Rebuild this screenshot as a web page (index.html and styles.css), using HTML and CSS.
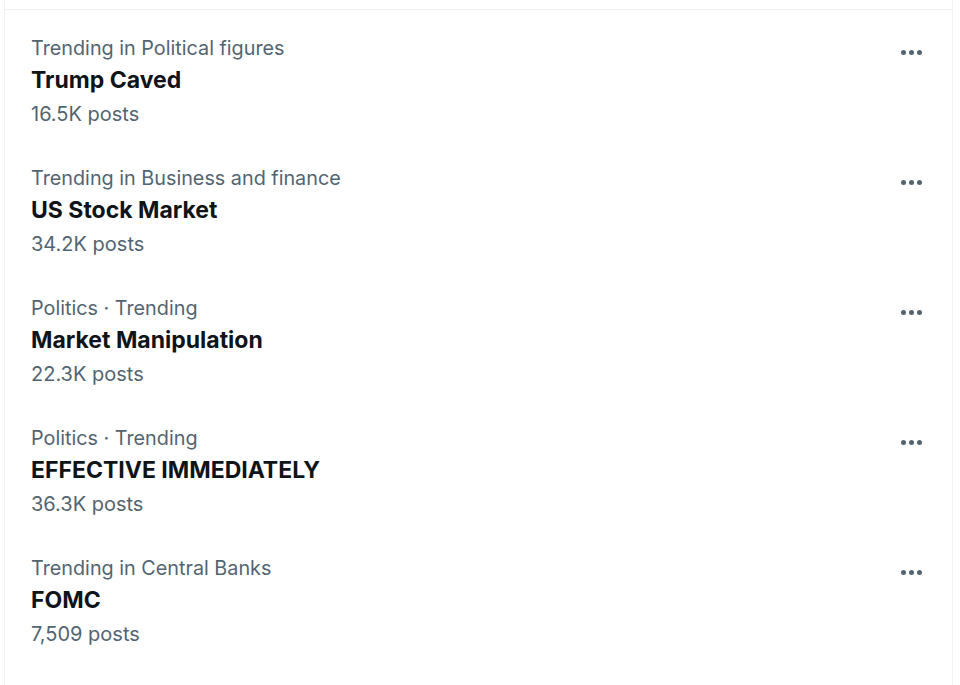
FILE: index.html
```html
<!DOCTYPE html>
<html>
<head>
<meta charset="utf-8">
<link rel="stylesheet" href="styles.css">
</head>
<body>
<div class="panel">
  <div class="top"></div>
  <div class="list">
    <div class="item">
      <div class="text">
        <div class="cat">Trending in Political figures</div>
        <div class="title">Trump Caved</div>
        <div class="count">16.5K posts</div>
      </div>
      <div class="more"><span></span><span></span><span></span></div>
    </div>
    <div class="item">
      <div class="text">
        <div class="cat">Trending in Business and finance</div>
        <div class="title">US Stock Market</div>
        <div class="count">34.2K posts</div>
      </div>
      <div class="more"><span></span><span></span><span></span></div>
    </div>
    <div class="item">
      <div class="text">
        <div class="cat">Politics · Trending</div>
        <div class="title">Market Manipulation</div>
        <div class="count">22.3K posts</div>
      </div>
      <div class="more"><span></span><span></span><span></span></div>
    </div>
    <div class="item">
      <div class="text">
        <div class="cat">Politics · Trending</div>
        <div class="title">EFFECTIVE IMMEDIATELY</div>
        <div class="count">36.3K posts</div>
      </div>
      <div class="more"><span></span><span></span><span></span></div>
    </div>
    <div class="item">
      <div class="text">
        <div class="cat">Trending in Central Banks</div>
        <div class="title">FOMC</div>
        <div class="count">7,509 posts</div>
      </div>
      <div class="more"><span></span><span></span><span></span></div>
    </div>
  </div>
</div>
</body>
</html>
```
FILE: styles.css
```css
html, body {
  margin: 0;
  padding: 0;
  background: #ffffff;
}
body {
  font-family: Inter, "Noto Sans", sans-serif;
  color: #0f1419;
}
.panel {
  margin-left: 4px;
  width: 949px;
  height: 685px;
  border-left: 1px solid #eff3f4;
  border-right: 1px solid #eff3f4;
  box-sizing: border-box;
}
.top {
  height: 9px;
  border-bottom: 1px solid #eff3f4;
}
.list {
  padding-top: 21px;
}
.item {
  display: flex;
  justify-content: space-between;
  align-items: flex-start;
  height: 130px;
  padding-left: 26px;
  padding-right: 27px;
}
.text {
  display: flex;
  flex-direction: column;
}
.cat {
  font-size: 19.8px;
  line-height: 34px;
  color: #536471;
  height: 33px;
}
.title {
  font-size: 23px;
  font-weight: 700;
  line-height: 32px;
  color: #0f1419;
}
.count {
  font-size: 20px;
  line-height: 36px;
  color: #536471;
}
.more {
  display: flex;
  gap: 3px;
  margin-top: 19px;
  margin-right: 3px;
}
.more span {
  width: 5px;
  height: 5px;
  border-radius: 50%;
  background: #536471;
}
```
